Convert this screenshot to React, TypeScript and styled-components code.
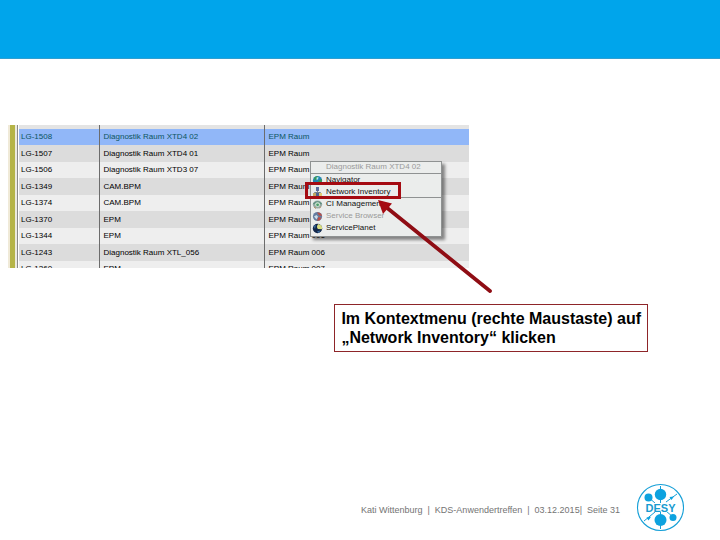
import React from "react";
import styled, { createGlobalStyle } from "styled-components";

const GlobalStyle = createGlobalStyle`
  * { box-sizing: border-box; }
  body {
    margin: 0;
    background: #fff;
    color: #000;
    font-family: "Liberation Sans", Arial, sans-serif;
  }
`;

const Slide = styled.div`
  display: flex;
  flex-direction: column;
  min-height: 100vh;
`;

const Banner = styled.header`
  height: 59px;
  background: #00a5eb;
  border-bottom: 1px solid #2f9fd0;
`;

const Content = styled.main`
  flex: 1;
  display: flex;
  flex-direction: column;
  padding: 66px 72px 0 8px;
`;

const Figure = styled.section`
  position: relative;
  display: flex;
  width: 100%;
  max-width: 461px;
`;

const Viewport = styled.div`
  flex: 1;
  display: flex;
  height: 143px;
  overflow: hidden;
`;

const Gutter = styled.div`
  flex: none;
  width: 10px;
  margin-right: 1px;
  border-left: 2px solid #f0ead8;
  border-right: 1px solid #8a8a8a;
  background: linear-gradient(to right, #b5b447 5px, #eceadf 5px);
`;

const Table = styled.table`
  flex: 1;
  align-self: flex-start;
  table-layout: fixed;
  border-collapse: collapse;
  font-size: 8px;
  line-height: 12px;
  white-space: nowrap;
`;

const Row = styled.tr<{ $selected?: boolean }>`
  height: 17px;
  background: #dcdcdc;
  color: #000;
  &:nth-child(even) {
    height: 16px;
    background: #eeeeee;
  }
  ${(p) => p.$selected && "&&:nth-child(even) { background: #91b7f8; color: #0b5560; }"}
  &:first-child {
    height: 4px;
    background: #e4e4e4;
  }
`;

const Cell = styled.td<{ $width?: number }>`
  ${(p) => p.$width && `width: ${p.$width}px;`}
  padding: 0 0 0 2px;
  & + & {
    padding-left: 4px;
    border-left: 1px solid #6c6c6c;
  }
`;

const Menu = styled.div`
  position: absolute;
  top: 36px;
  left: 302px;
  width: 132px;
  padding-bottom: 2px;
  border: 1px solid #8f9292;
  background: #ebedec;
  box-shadow: 3px 3px 3px rgba(0, 0, 0, 0.45);
  font-size: 8px;
  line-height: 12px;
  white-space: nowrap;
`;

const MenuTitle = styled.div`
  height: 12px;
  padding-left: 15px;
  border-bottom: 1px solid #8f9292;
  line-height: 10px;
  color: #9a9a9a;
`;

const MenuItem = styled.button<{ $divider?: boolean }>`
  display: flex;
  align-items: center;
  gap: 3px;
  width: 100%;
  height: 12px;
  padding: 0 0 0 1px;
  border: 0;
  border-bottom: ${(p) => (p.$divider ? "1px solid #8f9292" : "0")};
  background: none;
  color: #111;
  font: inherit;
  line-height: 10px;
  text-align: left;
  &:disabled { color: #9a9a9a; }
  svg { flex: none; }
`;

const Highlight = styled.div`
  position: absolute;
  top: 57px;
  left: 297px;
  width: 96px;
  height: 17px;
  border: 3px solid #a50b12;
`;

const Arrow = styled.svg`
  position: absolute;
  top: 70px;
  left: 368px;
`;

const Callout = styled.p`
  align-self: flex-end;
  margin: 36px 0 0;
  padding: 4px 6px;
  border: 1px solid #8e2529;
  font-size: 16px;
  font-weight: bold;
  line-height: 19px;
`;

const Footer = styled.footer`
  display: flex;
  align-items: center;
  justify-content: flex-end;
  gap: 16px;
  padding: 0 36px 8px 8px;
`;

const FooterText = styled.span`
  padding-top: 4px;
  color: #747474;
  font-size: 9px;
  line-height: 12px;
  white-space: pre;
`;

type Entry = { id: string; name: string; room: string };

const entries: Entry[] = [
  { id: "LG-1508", name: "Diagnostik Raum XTD4 02", room: "EPM Raum" },
  { id: "LG-1507", name: "Diagnostik Raum XTD4 01", room: "EPM Raum" },
  { id: "LG-1506", name: "Diagnostik Raum XTD3 07", room: "EPM Raum" },
  { id: "LG-1349", name: "CAM.BPM", room: "EPM Raum 001" },
  { id: "LG-1374", name: "CAM.BPM", room: "EPM Raum 001" },
  { id: "LG-1370", name: "EPM", room: "EPM Raum 001" },
  { id: "LG-1344", name: "EPM", room: "EPM Raum 001" },
  { id: "LG-1243", name: "Diagnostik Raum XTL_056", room: "EPM Raum 006" },
  { id: "LG-1260", name: "EPM", room: "EPM Raum 007" },
];

type IconKind = "globe" | "network" | "gear" | "browser" | "planet";

function MenuIcon({ kind }: { kind: IconKind }) {
  return (
    <svg width="11" height="11" viewBox="0 0 11 11" aria-hidden="true">
      {kind === "globe" && (
        <>
          <circle cx="5.5" cy="5.5" r="4.6" fill="#2386b4" />
          <path d="M2 3Q4 .6 6 1.4L5 4 3 5.4zM6.5 5.5L10 4Q10 8 7.4 9.5L6 7.5z" fill="#399951" />
          <path d="M4.5 2.5L6.5 2 6 4.5 4.6 4.7z" fill="#bce9f5" />
          <path d="M1 6.5Q2.5 10 6.5 10L4 7.6z" fill="#174979" />
        </>
      )}
      {kind === "network" && (
        <>
          <path d="M5.5 3V7M2.5 8V6.5H8.5V8" fill="none" stroke="#76808d" />
          <rect x="4" y="1" width="3" height="4" fill="#5a6c9d" />
          <rect x="1" y="7" width="3" height="3" fill="#c1a761" />
          <rect x="4" y="7" width="3" height="3" fill="#4d6291" />
          <rect x="7" y="7" width="3" height="3" fill="#e0c875" />
        </>
      )}
      {kind === "gear" && (
        <>
          <ellipse cx="5.5" cy="5.5" rx="4.7" ry="4" fill="#97aaa6" />
          <path d="M1.5 5Q5.5 .8 9.5 5" fill="none" stroke="#5b8e7d" strokeWidth="1.4" />
          <circle cx="5.6" cy="5.6" r="2.4" fill="#d3e9d5" />
          <circle cx="5.6" cy="5.8" r="1.4" fill="#4b9e68" />
          <path d="M2 8L4 9.5M9 7.6L7.5 9" stroke="#b98b61" />
        </>
      )}
      {kind === "browser" && (
        <>
          <circle cx="5.5" cy="5.5" r="4.6" fill="#647da0" />
          <path d="M5 1.5Q9.5 1 10 5L7 4.5z" fill="#b65049" />
          <path d="M2 5.5L4.5 4 6 5.8 4.5 8.4z" fill="#cbdce6" />
          <path d="M6.5 6L9.5 6.7 7.5 9.4 5 9.7z" fill="#bc4f48" />
        </>
      )}
      {kind === "planet" && (
        <>
          <circle cx="5.5" cy="5.5" r="4.7" fill="#13284b" />
          <path d="M6.2 1Q3.8 4 6 6L10 6.2Q10.8 2 6.2 1z" fill="#d9de80" />
          <path d="M1.5 3L4 2 3 6zM5 8.3L8.5 7.5 6.5 10z" fill="#3b6a9d" />
        </>
      )}
    </svg>
  );
}

type Item = { label: string; icon: IconKind; disabled?: boolean; divider?: boolean };

const items: Item[] = [
  { label: "Navigator", icon: "globe" },
  { label: "Network Inventory", icon: "network", divider: true },
  { label: "CI Management", icon: "gear" },
  { label: "Service Browser", icon: "browser", disabled: true },
  { label: "ServicePlanet", icon: "planet" },
];

const LogoLabel = styled.text`
  font-family: "Liberation Sans", Arial, sans-serif;
  font-size: 11px;
  font-weight: bold;
`;

function Logo() {
  return (
    <svg width="48" height="49" viewBox="0 0 48 49" role="img" aria-label="DESY">
      <circle cx="24.5" cy="24.5" r="23" fill="none" stroke="#159fd7" strokeWidth="1.1" />
      <g stroke="#159fd7" strokeWidth="1">
        <path d="M24.5 3V46M12 14L19 20M30 28L37 34M30 19L41 11M19 29L8 38" />
      </g>
      <g fill="#0da2df">
        <circle cx="24.5" cy="11.5" r="5.7" />
        <circle cx="24.5" cy="37" r="6" />
        <circle cx="12.5" cy="14.5" r="4" />
        <circle cx="37" cy="34.5" r="3.5" />
        <path d="M33.5 14L38 13.4 35.5 17zM10.5 34.5L15 33.7 12.5 37.4z" />
      </g>
      <rect x="9" y="20" width="31" height="9" fill="#fff" />
      <LogoLabel x="24.5" y="28.5" textAnchor="middle" fill="#179bd0">DESY</LogoLabel>
    </svg>
  );
}

export default function App() {
  return (
    <Slide>
      <GlobalStyle />
      <Banner />
      <Content>
        <Figure>
          <Viewport>
            <Gutter />
            <Table>
              <tbody>
                <Row>
                  <Cell $width={80} />
                  <Cell $width={165} />
                  <Cell />
                </Row>
                {entries.map((entry, i) => (
                  <Row key={entry.id} $selected={i === 0}>
                    <Cell>{entry.id}</Cell>
                    <Cell>{entry.name}</Cell>
                    <Cell>{entry.room}</Cell>
                  </Row>
                ))}
              </tbody>
            </Table>
          </Viewport>
          <Menu>
            <MenuTitle>Diagnostik Raum XTD4 02</MenuTitle>
            {items.map((item) => (
              <MenuItem key={item.label} type="button" disabled={item.disabled} $divider={item.divider}>
                <MenuIcon kind={item.icon} />
                {item.label}
              </MenuItem>
            ))}
          </Menu>
          <Highlight />
          <Arrow width="120" height="102" viewBox="0 0 120 102" aria-hidden="true">
            <path d="M10 12L114 96" stroke="#8f0d14" strokeWidth="3.8" strokeLinecap="round" />
            <path d="M2 5L16 8.5 7 19z" fill="#a50b12" />
          </Arrow>
        </Figure>
        <Callout>
          Im Kontextmenu (rechte Maustaste) auf
          <br />
          „Network Inventory“ klicken
        </Callout>
      </Content>
      <Footer>
        <FooterText>{"Kati Wittenburg  |  KDS-Anwendertreffen  |  03.12.2015|  Seite 31"}</FooterText>
        <Logo />
      </Footer>
    </Slide>
  );
}
